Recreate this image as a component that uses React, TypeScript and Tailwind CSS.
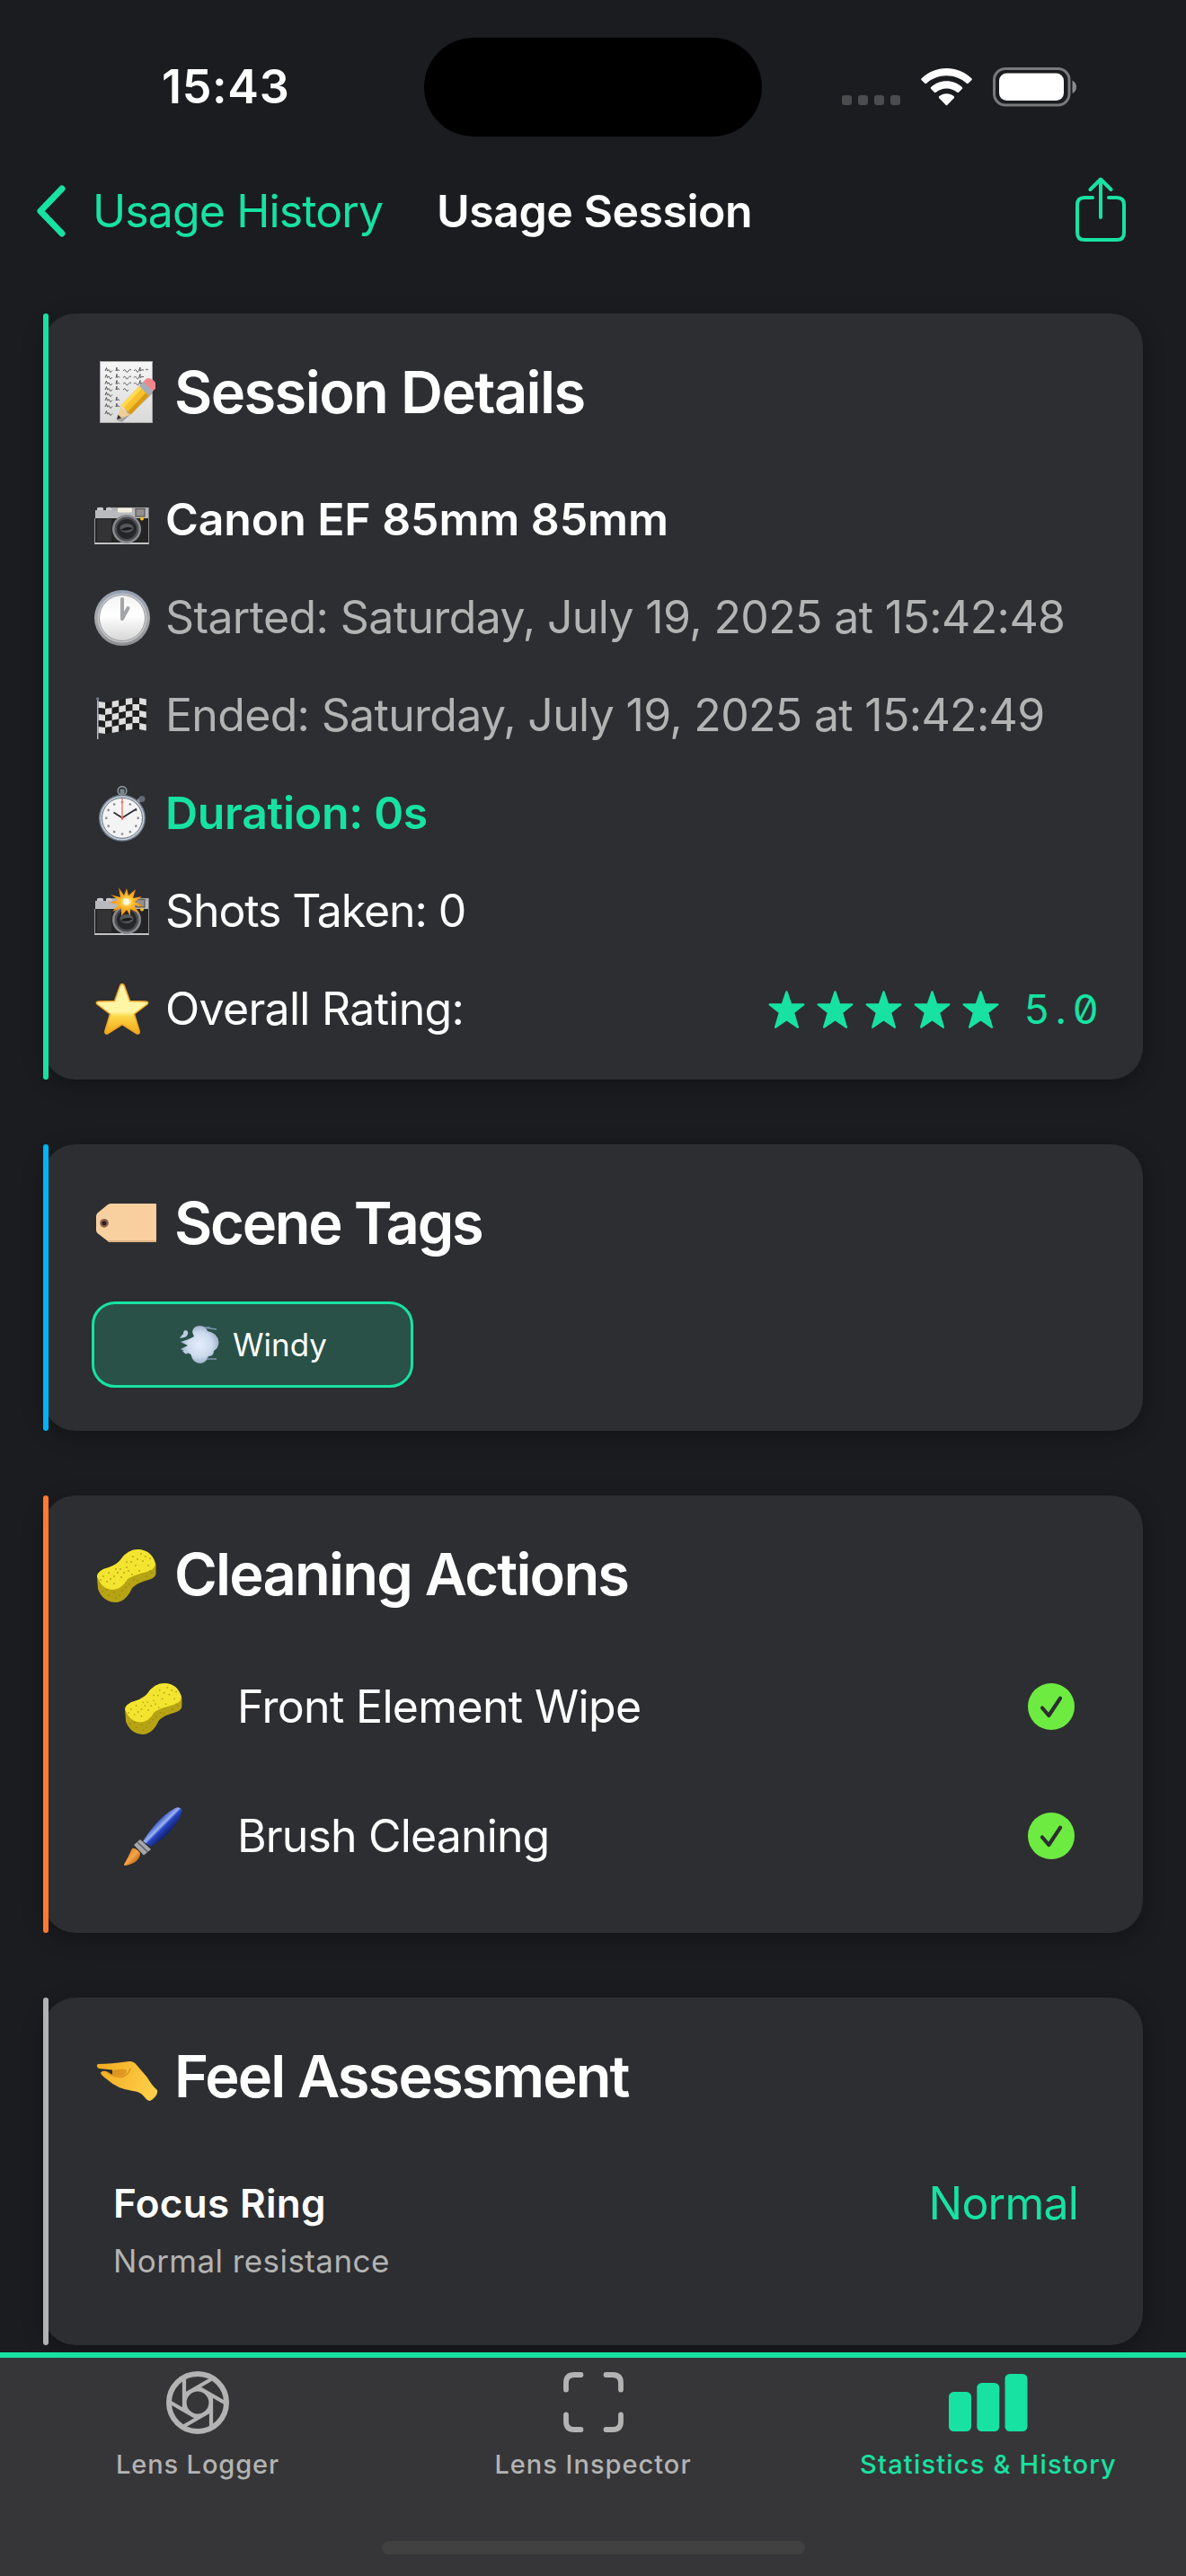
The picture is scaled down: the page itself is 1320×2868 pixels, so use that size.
import React from 'react';
import clsx from 'clsx';

type EmojiProps = { className?: string };

const MemoEmoji: React.FC<EmojiProps> = ({ className }) => (
  <svg viewBox="0 0 62 69" className={className} role="img" aria-label="memo">
    <defs>
      <linearGradient id="paper" x1="0" y1="0" x2="0" y2="1">
        <stop offset="0" stopColor="#f6f6f6" />
        <stop offset="1" stopColor="#d9d9d9" />
      </linearGradient>
    </defs>
    <rect x="0.5" y="0.5" width="58" height="68" fill="url(#paper)" stroke="#a9a9a9" />
    <g fill="none" stroke="#4a4a4a" strokeWidth="0.9">
      {[10, 17.5, 24.5, 31, 37, 43, 50, 58].map((y) => (
        <path key={y} d={`M6 ${y + 1}l1.500-3.500l1 3.500q2-3 2.500 0t3-.5`} />
      ))}
      {[10, 17.5, 24.5, 31, 43, 50].map((y) => (
        <path key={y} d={`M18 ${y + 1}l1-4v4q2-3 3 0`} />
      ))}
      {[10, 17.5, 24.5].map((y) => (
        <path key={y} d={`M26 ${y + 1}q2-3 3 0t3 0t3-1M38 ${y + 1}q1.500-3 3 0t3-1l1-3v4q2-2 4-1`} />
      ))}
      <path d="M51 10q1.500-2 3 0M26 32q2-3 3 0t3 0" />
    </g>
    <path d="M60 35L25 68l-6-2L52 30z" fill="#000" opacity="0.25" />
    <g transform="translate(56 26) rotate(133.5)">
      <path d="M-2-7.5h6v15h-6q-4-2-4-7.500t4-7.500z" fill="#f0858c" />
      <rect x="3" y="-7.5" width="7" height="15" fill="#a7adb8" />
      <rect x="10" y="-7.5" width="29" height="15" fill="#f6c12d" />
      <rect x="10" y="-7.5" width="29" height="4.5" fill="#d99a17" />
      <rect x="10" y="3.5" width="29" height="4" fill="#ffdb55" />
      <path d="M39-7.500L54 0L39 7.500q3-4 0-7.500q3-4 0-7.500z" fill="#efcf96" />
      <path d="M49-2.500L54 0l-5 2.500z" fill="#333" />
    </g>
  </svg>
);

const CameraBody: React.FC = () => (
  <>
    <path d="M3 1.500q3.500-1.500 7 0v3H3zM13 1.500q3.500-1.500 7 0v3h-7z" fill="#c9c9cb" />
    <path d="M1 4h19V1h40.500v13H1z" fill="#b9babd" />
    <path d="M1 4h19V1h40.500v3H1z" fill="#a1a2a5" opacity="0.5" />
    <rect x="0.5" y="13" width="60.5" height="28" fill="#242425" />
    <rect x="3" y="14" width="16" height="25" fill="#333335" />
    <rect x="0" y="40" width="61" height="2" fill="#c4c4c6" />
    <rect x="0" y="13" width="1" height="28" fill="#9a9a9c" />
    <rect x="60" y="13" width="1" height="28" fill="#8a8a8c" />
    <rect x="26" y="1.5" width="16" height="5" rx="1.5" fill="#f4efe0" />
    <rect x="46" y="2.5" width="10" height="8.5" fill="#94908d" stroke="#5c5755" strokeWidth="1.2" />
    <circle cx="36" cy="25" r="16" fill="#88898c" />
    <circle cx="36" cy="25" r="13.5" fill="#4c4d50" />
    <circle cx="36" cy="25" r="11" fill="#252628" />
    <ellipse cx="36" cy="24" rx="7.5" ry="5" fill="#55575a" />
    <path d="M29 26q6-5 14-2q-5 4-14 2z" fill="#18191a" />
    <circle cx="53" cy="13.5" r="2" fill="#f5bf1e" />
  </>
);

const CameraEmoji: React.FC<EmojiProps> = ({ className }) => (
  <svg viewBox="0 0 61 42" className={className} role="img" aria-label="camera">
    <CameraBody />
  </svg>
);

const CameraFlashEmoji: React.FC<EmojiProps> = ({ className }) => (
  <svg viewBox="0 0 61 53" className={className} role="img" aria-label="camera with flash">
    <defs>
      <radialGradient id="burst">
        <stop offset="0.1" stopColor="#fff3a0" />
        <stop offset="0.4" stopColor="#ffb92c" />
        <stop offset="1" stopColor="#f5860a" />
      </radialGradient>
    </defs>
    <g transform="translate(0 11)">
      <CameraBody />
    </g>
    <path
      d="M27 0L33 9L36 1L38 9L46 2L43 12L53 10L45 16L55 21L44 20L50 29L40 24L40 32L36 25L30 32L30 23L20 27L27 19L17 17L27 14L18 8L29 11z"
      fill="url(#burst)"
    />
    <circle cx="35.5" cy="16" r="3.5" fill="#fffbe0" />
  </svg>
);

const ClockEmoji: React.FC<EmojiProps> = ({ className }) => (
  <svg viewBox="0 0 62 62" className={className} role="img" aria-label="one o'clock">
    <defs>
      <linearGradient id="clockRim" x1="0" y1="0" x2="0" y2="1">
        <stop offset="0" stopColor="#93a0b4" />
        <stop offset="0.5" stopColor="#a9a9a9" />
        <stop offset="1" stopColor="#8d8f92" />
      </linearGradient>
      <linearGradient id="clockFace" x1="0" y1="0" x2="0" y2="1">
        <stop offset="0" stopColor="#f3f3f4" />
        <stop offset="0.45" stopColor="#ffffff" />
        <stop offset="1" stopColor="#d6d6d6" />
      </linearGradient>
    </defs>
    <circle cx="31" cy="31" r="31" fill="url(#clockRim)" />
    <circle cx="31" cy="31" r="27.5" fill="#c3c5c9" />
    <circle cx="31" cy="31" r="25.5" fill="url(#clockFace)" stroke="#9b9da0" strokeWidth="1" />
    <path d="M31 10v22l6.500-12" fill="none" stroke="#a3a4a6" strokeWidth="4" strokeLinecap="round" strokeLinejoin="round" />
  </svg>
);

// top edge of the cloth at each column border
const flagWave = [5, 6, 5, 3.5, 2, 1, 1, 2.5];

const FlagEmoji: React.FC<EmojiProps> = ({ className }) => (
  <svg viewBox="0 0 56 47" className={className} role="img" aria-label="chequered flag">
    {flagWave.slice(0, 7).map((top, col) =>
      [0, 1, 2, 3, 4].map((row) => {
        const x = 2.5 + col * 7.6;
        const y = row * 7;
        const next = flagWave[col + 1];
        return (
          <polygon
            key={`${col}-${row}`}
            points={`${x},${top + y} ${x + 7.7},${next + y} ${x + 7.7},${next + y + 7.1} ${x},${top + y + 7.1}`}
            fill={(col + row) % 2 === 0 ? '#dededf' : '#1f1f20'}
          />
        );
      })
    )}
    <rect x="1" y="1" width="1.5" height="46" fill="#b3b8bf" />
    <circle cx="1.7" cy="2" r="1.7" fill="#6d7885" />
  </svg>
);

const StopwatchEmoji: React.FC<EmojiProps> = ({ className }) => (
  <svg viewBox="0 0 52 62" className={className} role="img" aria-label="stopwatch">
    <circle cx="26" cy="5.5" r="4.8" fill="none" stroke="#8f979f" strokeWidth="1.6" />
    <rect x="23.5" y="3.5" width="5" height="8" rx="1" fill="#7d858d" />
    <path d="M43 18l4-4" stroke="#8b929a" strokeWidth="4" />
    <circle cx="48" cy="14.5" r="3.5" fill="#5f6a76" />
    <circle cx="26" cy="35.8" r="26" fill="#76808e" />
    <circle cx="26" cy="35.8" r="24.5" fill="#c3d0e2" />
    <circle cx="26" cy="35.8" r="22.5" fill="#f4f4f4" stroke="#6c6f75" strokeWidth="1" />
    {[0, 30, 60, 90, 120, 150, 180, 210, 240, 270, 300, 330].map((deg) => (
      <rect key={deg} x="24.8" y="17" width="2.4" height="2.2" fill="#85878a" transform={`rotate(${deg} 26 35.8)`} />
    ))}
    <path d="M16.500 29.500L26 35.500L42 25.500" fill="none" stroke="#26292d" strokeWidth="1.7" />
    <path d="M26 14v24" stroke="#ee7764" strokeWidth="1.4" />
    <circle cx="26" cy="35.5" r="1.5" fill="#e8624f" />
  </svg>
);

const StarEmoji: React.FC<EmojiProps> = ({ className }) => (
  <svg viewBox="0 0 62 59" className={className} role="img" aria-label="star">
    <defs>
      <linearGradient id="starFill" x1="0" y1="0" x2="0" y2="1">
        <stop offset="0" stopColor="#fff3a8" />
        <stop offset="0.55" stopColor="#fef6a4" />
        <stop offset="0.65" stopColor="#fbd74a" />
        <stop offset="1" stopColor="#f5a713" />
      </linearGradient>
    </defs>
    <path
      d="M31 1.500q1.800 0 2.800 3l5.700 16l18 .5q3.500.3 1.500 3L44.500 35L50 53.500q1 4-2.500 3.500L31 46.500L14.500 57q-3.500.500-2.500-3.500L17.500 35L3 24q-2-2.700 1.500-3l18-.5l5.700-16q1-3 2.800-3z"
      fill="url(#starFill)"
      stroke="#eda52a"
      strokeWidth="1.5"
    />
  </svg>
);

const TagEmoji: React.FC<EmojiProps> = ({ className }) => (
  <svg viewBox="0 0 67 43" className={className} role="img" aria-label="label">
    <path d="M16 0h50q1 0 1 1v41q0 1-1 1H16q-2 0-3.500-1.500L1.500 33Q0 31.500 0 29.500V14q0-2 1.500-3.500L12.500 1.500Q14 0 16 0z" fill="#f8cf9f" />
    <path d="M14 43h52q1 0 1-1v-1H12.500z" fill="#dcb182" />
    <circle cx="9" cy="21.8" r="3.7" fill="#262225" stroke="#91604e" strokeWidth="2.3" />
  </svg>
);

const WindEmoji: React.FC<EmojiProps> = ({ className }) => (
  <svg viewBox="0 0 44 42" className={className} role="img" aria-label="wind">
    <defs>
      <radialGradient id="cloud" cx="0.5" cy="0.5" r="0.55">
        <stop offset="0" stopColor="#e4effb" />
        <stop offset="0.6" stopColor="#cbdaec" />
        <stop offset="1" stopColor="#93a5bf" />
      </radialGradient>
    </defs>
    <path
      d="M14 7Q15 0 22.500 0Q29 0 31 6Q42 8 43.500 18Q43.500 25 38 28Q38 34 32 34Q29 42 22.500 42Q14 41 12.500 32L1 26L9 22L1 18L10 15L16 12z"
      fill="url(#cloud)"
    />
    <path d="M30 2.500l11 1.500M30 37h11M28 2h6" stroke="#8296b3" strokeWidth="1.3" />
    <path d="M0 14q1.500-3 4-5q0-4 3-4q3 1 2 4.500q-1 3-4 3.500zM3 28q3-1 5 0l1 3q-3 1-4-1z" fill="#bccde2" />
  </svg>
);

const spongeHoles = [
  [8, 30], [14, 26], [20, 30], [12, 36], [20, 38], [27, 22], [28, 31], [34, 14], [36, 24], [41, 8],
  [44, 18], [50, 5], [52, 13], [58, 18], [48, 24], [60, 10], [7, 47], [14, 51], [22, 54], [29, 46],
  [37, 39], [46, 35], [56, 30], [62, 26], [22, 22], [40, 28], [5, 34], [16, 33], [24, 26], [31, 26],
  [34, 20], [39, 14], [46, 11], [55, 8], [12, 45], [20, 48], [26, 51], [33, 42], [42, 34], [60, 24],
];

const SpongeEmoji: React.FC<EmojiProps> = ({ className }) => (
  <svg viewBox="0 0 67 59" className={className} role="img" aria-label="sponge">
    <path
      d="M1 30Q1 26 8 22Q20 19 26 13Q34 0 47 0Q62 1 66.500 17V27Q66 32 58 34Q46 37 40 43Q33 59 21 59Q7 58 2 44z"
      fill="#b7a414"
    />
    <path
      d="M1 30Q1 26 8 22Q20 19 26 13Q34 0 47 0Q62 1 66 16Q65 23 56 25Q41 29 35 33Q28 45 18 45Q6 44 1 30z"
      fill="#f3e52f"
    />
    {spongeHoles.map(([x, y]) => (
      <circle key={`${x}-${y}`} cx={x} cy={y} r="0.9" fill="#8f7d0b" opacity="0.65" />
    ))}
  </svg>
);

const BrushEmoji: React.FC<EmojiProps> = ({ className }) => (
  <svg viewBox="0 0 65 65" className={className} role="img" aria-label="paintbrush">
    <defs>
      <linearGradient id="handle" x1="0.35" y1="0.35" x2="0.65" y2="0.65">
        <stop offset="0" stopColor="#2747bd" />
        <stop offset="0.4" stopColor="#9db5f2" />
        <stop offset="0.55" stopColor="#2746c4" />
        <stop offset="1" stopColor="#12206e" />
      </linearGradient>
      <linearGradient id="bristle" x1="0" y1="0" x2="1" y2="1">
        <stop offset="0" stopColor="#c9690f" />
        <stop offset="0.5" stopColor="#f7a443" />
        <stop offset="1" stopColor="#8f4306" />
      </linearGradient>
    </defs>
    <path d="M21 38Q38 11 57 1Q62-1 64.500 3Q65 7 61 14Q48 34 30 44z" fill="url(#handle)" />
    <path d="M18 36L30 47L22 53.500L11 42z" fill="#a6a8ab" />
    <path d="M15 39L26.500 50" stroke="#5e6063" strokeWidth="1.5" />
    <path d="M9 46Q13 45 18 51Q18 62 1 65Q-1 65 1 62Q5 55 9 46z" fill="url(#bristle)" />
  </svg>
);

const PinchEmoji: React.FC<EmojiProps> = ({ className }) => (
  <svg viewBox="0 0 69 44" className={className} role="img" aria-label="pinching hand">
    <defs>
      <linearGradient id="skin" x1="0" y1="0.2" x2="1" y2="0.5">
        <stop offset="0" stopColor="#f2ac22" />
        <stop offset="1" stopColor="#ffce48" />
      </linearGradient>
    </defs>
    <path
      d="M2 3Q16 3 37 0Q42 0 45 4L57 18Q62 27 68 32Q69.500 38 60 44Q57 44 54 40Q50 34 41 33Q24 31 12 20Q5 15 5 12.500Q7 9.500 12 11.500L18 15V9.500L3 8Q-1 5 2 3z"
      fill="url(#skin)"
    />
    <path d="M18 10Q28 8 33 9Q36 12 30 16Q24 17 18 15" fill="#c77b12" opacity="0.55" />
    <path d="M12 12Q20 18 29 17.500Q37 14 38 8" fill="none" stroke="#d9901a" strokeWidth="1.5" />
  </svg>
);

const RatingStar: React.FC = () => (
  <svg viewBox="0 0 41 42" className="w-[41px] h-[42px] text-[#17e2a2]">
    <path
      d="M20.500 1.500l4.600 13.700l14.200.2l-11.300 8.900l4.800 16.200l-12.300-8.500l-12.300 8.500l4.800-16.200l-11.300-8.900l14.200-.2z"
      fill="currentColor"
      stroke="currentColor"
      strokeWidth="2.4"
      strokeLinejoin="round"
    />
  </svg>
);

const CheckBadge: React.FC = () => (
  <svg viewBox="0 0 52 52" className="w-[52px] h-[52px] mr-1">
    <circle cx="26" cy="26" r="26" fill="#6deb41" />
    <path d="M16 27.500l7.300 8.500L36 16.800" fill="none" stroke="#2d2e31" strokeWidth="4.2" strokeLinecap="round" strokeLinejoin="round" />
  </svg>
);

const ApertureIcon: React.FC = () => (
  <svg viewBox="-35 -35 70 70" className="w-[70px] h-[70px]" fill="none" stroke="currentColor">
    <circle r="32" strokeWidth="6" />
    <circle r="14.2" strokeWidth="3.6" />
    {[0, 60, 120, 180, 240, 300].map((deg) => (
      <path key={deg} d="M-15-28V7" strokeWidth="4.2" transform={`rotate(${deg})`} />
    ))}
  </svg>
);

const ViewfinderIcon: React.FC = () => (
  <svg viewBox="0 0 67 70" className="w-[67px] h-[70px]" fill="none" stroke="currentColor" strokeWidth="5.8" strokeLinecap="round">
    <path d="M3 20.500V13Q3 4 12 4h7.500M47.500 4H55q9 0 9 9v7.500M64 48.500V56q0 9-9 9h-7.500M19.500 65H12q-9 0-9-9v-7.500" />
  </svg>
);

const BarsIcon: React.FC = () => (
  <svg viewBox="0 0 88 70" className="w-[88px] h-[70px]" fill="currentColor">
    <rect x="0" y="23" width="25" height="44" rx="5.5" />
    <rect x="31.3" y="13" width="25" height="54" rx="5.5" />
    <rect x="62.5" y="3" width="25" height="64" rx="5.5" />
  </svg>
);

const StatusBar: React.FC = () => (
  <div className="flex items-center h-[194px] pl-[180px]">
    <div className="w-[292px] text-[52px] leading-none font-semibold tracking-[0.7px] text-white">15:43</div>
    <div className="w-[376px] h-[110px] rounded-full bg-black" />
    <div className="flex gap-[7px] ml-[89px] mt-[29px]">
      {[0, 1, 2, 3].map((dot) => (
        <div key={dot} className="w-[11px] h-[11px] rounded-[3px] bg-[#4b4c4e]" />
      ))}
    </div>
    <svg viewBox="0 0 57 42" className="w-[57px] h-[42px] ml-[23px]" fill="#fff">
      <path d="M28.500 0C39 0 49 4.200 56.300 11.200q1 1 0 2l-3.600 3.600q-.9.900-1.900 0C44.700 11.300 36.900 8.300 28.500 8.300S12.300 11.300 6.200 16.800q-1 .900-1.900 0L.7 13.200q-1-1 0-2C8 4.200 18 0 28.500 0z" />
      <path d="M28.500 14.200c6.700 0 12.800 2.600 17.300 6.800q1.100 1 0 2.100l-3.700 3.700q-.9.900-1.900 0c-3.100-2.800-7.200-4.400-11.700-4.400s-8.600 1.600-11.700 4.400q-1 .900-1.900 0l-3.700-3.700q-1.100-1.100 0-2.100c4.500-4.200 10.600-6.800 17.300-6.800z" />
      <path d="M28.500 28.200c3.100 0 6 1.100 8.100 2.900q1.100 1 .1 2.100l-7.200 7.600q-1 1-2 0l-7.200-7.600q-1-1.100.1-2.100c2.100-1.800 5-2.900 8.100-2.900z" />
    </svg>
    <svg viewBox="0 0 94 44" className="w-[94px] h-[44px] ml-[23px]">
      <rect x="1.5" y="1.5" width="83.5" height="40.5" rx="12.5" fill="none" stroke="#78797b" strokeWidth="3" />
      <rect x="7" y="6.5" width="72" height="30.5" rx="8.5" fill="#fff" />
      <path d="M88.500 14.500q4.500 2.500 4.500 7.300t-4.500 7.300z" fill="#8b8b8d" />
    </svg>
  </div>
);

const NavBar: React.FC = () => (
  <div className="flex items-center h-[82px] pl-[38px] pr-[66px] text-[50px] leading-[61px]">
    <svg viewBox="0 0 38 60" className="w-[38px] h-[60px]">
      <path d="M31 5L7 30l24 25" fill="none" stroke="#17e2a2" strokeWidth="7" strokeLinecap="round" strokeLinejoin="round" />
    </svg>
    <div className="w-[383px] ml-[27px] tracking-[-0.89px] text-[#17e2a2]">Usage History</div>
    <h1 className="font-semibold tracking-[-0.5px] text-white">Usage Session</h1>
    <svg
      viewBox="0 0 58 72"
      className="w-[58px] h-[72px] ml-auto mb-1"
      fill="none"
      stroke="#17e2a2"
      strokeWidth="4"
      strokeLinecap="round"
      strokeLinejoin="round"
    >
      <path d="M29 3v42M17.500 14L29 2.500L40.500 14" />
      <path d="M20 23h-9q-8 0-8 8v31q0 8 8 8h36q8 0 8-8V31q0-8-8-8h-9" />
    </svg>
  </div>
);

interface CardProps {
  title: string;
  titleClass: string;
  emoji: React.ReactNode;
  accent: string;
  children: React.ReactNode;
}

const Card: React.FC<CardProps> = ({ title, titleClass, emoji, accent, children }) => (
  <section className="flex relative rounded-[36px] bg-[#2d2e31] shadow-[0_6px_24px_rgba(0,0,0,0.3)]">
    <div className={clsx('absolute left-0 inset-y-0 w-[6px] rounded-[3px]', accent)} />
    <div className="flex-1 pl-[54px] pr-12 py-12">
      <div className="flex items-center h-[78px]">
        <div className="w-[92px]">{emoji}</div>
        <h2 className={clsx('pt-[2px] text-[65px] leading-[78px] font-semibold text-white', titleClass)}>{title}</h2>
      </div>
      {children}
    </div>
  </section>
);

const details = [
  { emoji: <CameraEmoji className="w-[61px] h-[42px] ml-[3px] mt-3" />, text: 'Canon EF 85mm 85mm', style: 'font-semibold tracking-[-0.1px] text-white' },
  { emoji: <ClockEmoji className="w-[62px] h-[62px] ml-[3px]" />, text: 'Started: Saturday, July 19, 2025 at 15:42:48', style: 'tracking-[-0.63px] text-[#b3b3b3]' },
  { emoji: <FlagEmoji className="w-[56px] h-[47px] ml-[5px] mt-[5px]" />, text: 'Ended: Saturday, July 19, 2025 at 15:42:49', style: 'tracking-[-0.68px] text-[#b3b3b3]' },
  { emoji: <StopwatchEmoji className="w-[52px] h-[62px] ml-2" />, text: 'Duration: 0s', style: 'font-semibold tracking-[-0.3px] text-[#17e2a2]' },
  { emoji: <CameraFlashEmoji className="w-[61px] h-[53px] ml-[3px]" />, text: 'Shots Taken: 0', style: 'tracking-[-1.1px] text-white' },
  { emoji: <StarEmoji className="w-[62px] h-[59px] ml-[3px]" />, text: 'Overall Rating:', style: 'tracking-[-0.7px] text-white', rating: '5.0' },
];

const actions = [
  { emoji: <SpongeEmoji className="w-[65px] h-[57px] ml-3 mt-1" />, name: 'Front Element Wipe', style: 'tracking-[-0.66px]' },
  { emoji: <BrushEmoji className="w-[65px] h-[65px] ml-3" />, name: 'Brush Cleaning', style: 'tracking-[-0.85px]' },
];

const tabs = [
  { icon: <ApertureIcon />, label: 'Lens Logger', style: 'tracking-[0.89px]', active: false },
  { icon: <ViewfinderIcon />, label: 'Lens Inspector', style: 'tracking-[1px]', active: false },
  { icon: <BarsIcon />, label: 'Statistics & History', style: 'tracking-[1.2px]', active: true },
];

const TabBar: React.FC = () => (
  <nav className="flex flex-col items-center h-[249px] shrink-0 relative border-t-[6px] border-[#17e2a2] bg-[#363638]">
    <div className="grid grid-cols-3 w-full pt-[15px]">
      {tabs.map((tab) => (
        <div
          key={tab.label}
          className={clsx('flex flex-col items-center gap-4', tab.active ? 'text-[#17e2a2]' : 'text-[#b3b3b3]')}
        >
          {tab.icon}
          <span className={clsx('text-[29px] leading-9 font-medium', tab.style)}>{tab.label}</span>
        </div>
      ))}
    </div>
    <div className="w-[471px] h-[15px] mt-[67px] rounded-full bg-[#414142]" />
  </nav>
);

const App: React.FC = () => {
  return (
    <div className="flex flex-col w-[1320px] h-[2868px] overflow-hidden bg-[#1b1c1f] font-['Inter',sans-serif]">
      <StatusBar />
      <NavBar />

      <main className="flex flex-col flex-1 gap-[72px] px-12 pt-[73px]">
        <Card
          title="Session Details"
          titleClass="tracking-[-1.6px]"
          accent="bg-[#17e2a2]"
          emoji={<MemoEmoji className="w-[62px] h-[69px] ml-[9px]" />}
        >
          <div className="flex flex-col gap-12 mt-[73px]">
            {details.map((row) => (
              <div key={row.text} className="flex items-center h-[61px] text-[50px] leading-[61px]">
                <div className="w-[82px]">{row.emoji}</div>
                <span className={row.style}>{row.text}</span>
                {row.rating && (
                  <div className="flex items-center gap-[13px] ml-auto">
                    {[1, 2, 3, 4, 5].map((n) => (
                      <RatingStar key={n} />
                    ))}
                    <span className="w-[84px] ml-[15px] text-[45px] tracking-[8px] text-[#17e2a2] [font-feature-settings:'zero'] whitespace-nowrap">
                      {row.rating}
                    </span>
                  </div>
                )}
              </div>
            ))}
          </div>
        </Card>

        <Card
          title="Scene Tags"
          titleClass="tracking-[-2.25px]"
          accent="bg-[#00b4f5]"
          emoji={<TagEmoji className="w-[67px] h-[43px] ml-[5px]" />}
        >
          <div className="flex items-center justify-center w-[358px] h-24 mt-[49px] pl-[2px] rounded-[26px] border-[3px] border-[#17e2a2] bg-[#295148]">
            <WindEmoji className="w-[44px] h-[42px] mr-[15px]" />
            <span className="text-[35px] leading-[43px] text-white">Windy</span>
          </div>
        </Card>

        <Card
          title="Cleaning Actions"
          titleClass="tracking-[-1.8px]"
          accent="bg-[#ff7a2f]"
          emoji={<SpongeEmoji className="w-[67px] h-[59px] ml-[5px] mt-1" />}
        >
          <div className="flex flex-col gap-6 mt-[49px]">
            {actions.map((action) => (
              <div key={action.name} className="flex items-center h-[120px] px-6 text-[50px] leading-[61px] text-white">
                <div className="w-[138px]">{action.emoji}</div>
                <span className={clsx('flex-1', action.style)}>{action.name}</span>
                <CheckBadge />
              </div>
            ))}
          </div>
        </Card>

        <Card
          title="Feel Assessment"
          titleClass="tracking-[-1.9px]"
          accent="bg-[#b3b3b3]"
          emoji={<PinchEmoji className="w-[69px] h-[44px] ml-[5px] mt-3" />}
        >
          <div className="flex flex-col gap-3 mt-[49px] p-6">
            <div className="flex justify-between leading-[61px]">
              <span className="text-[44px] font-semibold tracking-[0.31px] text-white">Focus Ring</span>
              <span className="text-[50px] tracking-[-0.8px] text-[#17e2a2]">Normal</span>
            </div>
            <div className="text-[35px] leading-[43px] tracking-[0.43px] text-[#b3b3b3]">Normal resistance</div>
          </div>
        </Card>
      </main>

      <TabBar />
    </div>
  );
};

export default App;
